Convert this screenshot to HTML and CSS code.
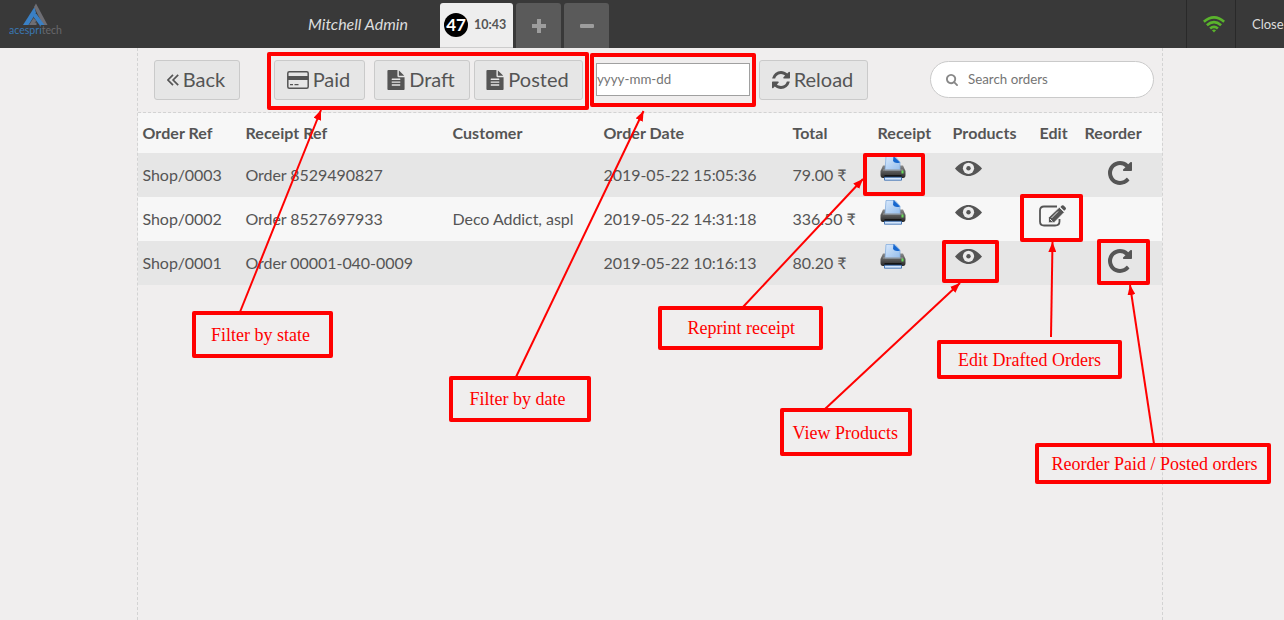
FILE: index.html
```html
<!DOCTYPE html>
<html lang="en">
<head>
<meta charset="utf-8">
<title>Orders</title>
<link rel="stylesheet" href="styles.css">
</head>
<body>
<svg class="defs" width="0" height="0">
  <defs>
    <linearGradient id="paper" x1="0" y1="0" x2="1" y2="1"><stop offset="0" stop-color="#d9e9fc"/><stop offset="1" stop-color="#94bdec"/></linearGradient>
    <linearGradient id="shell" x1="0" y1="0" x2="0" y2="1"><stop offset="0" stop-color="#8a8a8a"/><stop offset=".45" stop-color="#5c5c5c"/><stop offset="1" stop-color="#262626"/></linearGradient>
    <symbol id="file" viewBox="128 0 1536 1792"><path d="M1596 476q14 14 28 36h-472v-472q22 14 36 28zm-476 164h544v1056q0 40-28 68t-68 28h-1344q-40 0-68-28t-28-68v-1600q0-40 28-68t68-28h800v544q0 40 28 68t68 28zm160 736v-64q0-14-9-23t-23-9h-704q-14 0-23 9t-9 23v64q0 14 9 23t23 9h704q14 0 23-9t9-23zm0-256v-64q0-14-9-23t-23-9h-704q-14 0-23 9t-9 23v64q0 14 9 23t23 9h704q14 0 23-9t9-23zm0-256v-64q0-14-9-23t-23-9h-704q-14 0-23 9t-9 23v64q0 14 9 23t23 9h704q14 0 23-9t9-23z"/></symbol>
    <symbol id="repeat" viewBox="128 128 1536 1536"><path d="M1664 256v448q0 26-19 45t-45 19h-448q-42 0-59-40-17-39 14-69l138-138q-148-137-349-137-104 0-198.500 40.500t-163.500 109.500-109.500 163.500-40.500 198.500 40.500 198.500 109.500 163.500 163.500 109.500 198.500 40.500q119 0 225-52t179-147q7-10 23-12 15 0 25 9l137 138q9 8 9.500 20.500t-7.500 22.500q-109 132-264 204.500t-327 72.500q-156 0-298-61t-245-164-164-245-61-298 61-298 164-245 245-164 298-61q147 0 284.500 55.500t244.500 156.500l130-129q29-31 70-14 39 17 39 59z"/></symbol>
    <symbol id="eye" viewBox="0 0 27 15"><path d="M0 7.500C5 2 9 0 13.500 0S22 2 27 7.500C22 13 18 15 13.500 15S5 13 0 7.500z"/><circle cx="13.500" cy="7.300" r="5.600" fill="#ececec"/><circle cx="13.500" cy="7.300" r="2.200"/></symbol>
    <symbol id="printer" viewBox="0 0 26 25">
      <path d="M3 9.500h20l2.500 5.500v4q0 3-2.500 3H3q-2.500 0-2.500-3v-4z" fill="url(#shell)"/>
      <path d="M6 .5h9l5 5.500v8H5z" fill="url(#paper)" stroke="#86aede" stroke-width=".8"/>
      <path d="M13.500 0 20 6.500q-5 1.500-7-1.500z" fill="#1767ce"/>
      <path d="M3 14h20" stroke="#9a9a9a" stroke-width="1"/>
      <path d="M4.500 19h17v3h-17z" fill="#161616"/>
      <path d="M4.500 21.200h17v3h-17z" fill="#d4e6fc" stroke="#275fa9" stroke-width=".8"/>
      <path d="M21.500 14.500h2v3h-2z" fill="#68dc58"/>
    </symbol>
  </defs>
</svg>

<header class="topbar">
  <svg class="logo" width="64" height="40" viewBox="0 0 64 40">
    <path d="M25.500 4 14 22h5.500L27 10z" fill="#3a80c5"/>
    <path d="M27 .5 25 4l9 18h4.500z" fill="#6e6e74"/>
    <path d="M25.500 10.500 24.500 14l6 8h5L27.500 11z" fill="#3a80c5"/>
    <path d="M24.500 15 20 22h7.500v-2.500h-2l2-1.500z" fill="#6e6e74"/>
    <text x="0" y="31" font-size="10.500" textLength="53" lengthAdjust="spacingAndGlyphs"><tspan fill="#3a77b3">acespri</tspan><tspan fill="#68686c">tech</tspan></text>
  </svg>
  <span class="username">Mitchell Admin</span>
  <nav class="tabs">
    <div class="tab active"><span class="seq">47</span><span class="time">10:43</span></div>
    <div class="tab"><svg width="14" height="14"><path d="M5 0h4v5h5v4H9v5H5V9H0V5h5z"/></svg></div>
    <div class="tab"><svg width="14" height="14"><rect y="5" width="14" height="4" rx="1"/></svg></div>
  </nav>
  <div class="status">
    <svg width="22" height="17" viewBox="0 0 22 17"><g fill="none" stroke="#5ab32c" stroke-width="2.700"><path d="M.8 5.800Q11-3 21.200 5.800"/><path d="M3.900 9.200Q11 3 18.100 9.200"/><path d="M7.100 12.500Q11 9.100 14.900 12.500"/></g><path d="M8.900 14.300q2.100-1.500 4.200 0L11 16.600z" fill="#5ab32c"/></svg>
  </div>
  <div class="close">Close</div>
</header>

<main class="orders">
  <div class="toolbar">
    <button class="btn back"><svg width="12" height="12" viewBox="0 0 12 12" class="line"><path d="M6 .8.900 6 6 11.200M11.200.800 6.100 6l5.100 5.200"/></svg>Back</button>
    <button class="btn paid"><svg width="22" height="18" viewBox="0 0 22 18"><rect x=".8" y=".8" width="20.400" height="16.400" rx="1.500" fill="none" stroke="#555" stroke-width="1.500"/><path d="M1 5h20v4H1zM3 13h3v1.300H3zm4.500 0h4v1.300h-4z"/></svg>Paid</button>
    <button class="btn draft"><svg width="18" height="20"><use href="#file"/></svg>Draft</button>
    <button class="btn posted"><svg width="18" height="20"><use href="#file"/></svg>Posted</button>
    <input class="date" type="text" placeholder="yyyy-mm-dd">
    <button class="btn reload"><svg width="18" height="18" viewBox="128 128 1536 1536"><path d="M1639 1056q0 5-1 7-64 268-268 434.500t-478 166.500q-146 0-282.500-55t-243.500-157l-129 129q-19 19-45 19t-45-19-19-45v-448q0-26 19-45t45-19h448q26 0 45 19t19 45-19 45l-137 137q71 66 161 102t187 36q134 0 250-65t186-179q11-17 53-117 8-23 30-23h192q13 0 22.500 9.500t9.500 22.500zm25-800v448q0 26-19 45t-45 19h-448q-26 0-45-19t-19-45 19-45l138-138q-148-137-349-137-134 0-250 65t-186 179q-11 17-53 117-8 23-30 23h-199q-13 0-22.500-9.500t-9.500-22.500v-7q65-268 270-434.500t480-166.500q146 0 284 55.500t245 156.500l130-129q19-19 45-19t45 19 19 45z"/></svg>Reload</button>
    <label class="search"><svg width="12" height="12" viewBox="64 128 1664 1664"><path d="M1216 832q0-185-131.500-316.500t-316.500-131.500-316.500 131.500-131.500 316.500 131.500 316.500 316.500 131.500 316.500-131.500 131.500-316.500zm512 832q0 52-38 90t-90 38q-54 0-90-38l-343-342q-179 124-399 124-143 0-273.500-55.500t-225-150-150-225-55.500-273.500 55.500-273.500 150-225 225-150 273.500-55.500 273.500 55.500 225 150 150 225 55.500 273.500q0 220-124 399l343 343q37 37 37 90z"/></svg><input type="text" placeholder="Search orders"></label>
  </div>

  <table class="list">
    <colgroup><col class="c-ref"><col class="c-receipt"><col class="c-customer"><col class="c-date"><col class="c-total"><col class="c-print"><col class="c-products"><col class="c-edit"><col></colgroup>
    <thead><tr><th>Order Ref</th><th>Receipt Ref</th><th>Customer</th><th>Order Date</th><th>Total</th><th>Receipt</th><th>Products</th><th>Edit</th><th>Reorder</th></tr></thead>
    <tbody>
      <tr><td>Shop/0003</td><td>Order 8529490827</td><td></td><td>2019-05-22 15:05:36</td><td>79.00 ₹</td>
        <td><svg class="i-print"><use href="#printer"/></svg></td><td><svg class="i-eye"><use href="#eye"/></svg></td><td></td><td><svg class="i-repeat"><use href="#repeat"/></svg></td></tr>
      <tr><td>Shop/0002</td><td>Order 8527697933</td><td>Deco Addict, aspl</td><td>2019-05-22 14:31:18</td><td>336.50 ₹</td>
        <td><svg class="i-print"><use href="#printer"/></svg></td><td><svg class="i-eye"><use href="#eye"/></svg></td>
        <td><svg class="i-edit" viewBox="0 0 27 22"><path d="M18 1.500H5Q1 1.500 1 5.500v11Q1 20.500 5 20.500h11q4.500 0 4.500-4V14" fill="none" stroke="#555" stroke-width="1.800"/><path d="M20.300 2.300 25.300 7.300 15 17.700H9.500v-5.200z" stroke="#f7f7f7" stroke-width=".8"/><path d="m21.400 2 1.400-1.400q.9-.8 1.800 0l2 2q.9.900 0 1.800l-1.400 1.400z"/><path d="m12.500 13 6.500-6.500M11 14l2.500 2.500" stroke="#f7f7f7" stroke-width=".9"/></svg></td><td></td></tr>
      <tr><td>Shop/0001</td><td>Order 00001-040-0009</td><td></td><td>2019-05-22 10:16:13</td><td>80.20 ₹</td>
        <td><svg class="i-print"><use href="#printer"/></svg></td><td><svg class="i-eye"><use href="#eye"/></svg></td><td></td><td><svg class="i-repeat"><use href="#repeat"/></svg></td></tr>
    </tbody>
  </table>
</main>

<svg class="notes" width="1284" height="620" viewBox="0 0 1284 620">
  <defs><marker id="head" viewBox="0 0 10 8" refX="10" refY="4" markerWidth="10" markerHeight="8" markerUnits="userSpaceOnUse" orient="auto"><path d="M0 0 10 4 0 8z"/></marker></defs>
  <g class="frames">
    <rect x="269" y="54" width="318" height="54"/>
    <rect x="592" y="55" width="162" height="50"/>
    <rect x="865" y="155" width="58" height="39"/>
    <rect x="1022" y="196" width="59" height="44"/>
    <rect x="944" y="242" width="53" height="39"/>
    <rect x="1099" y="241" width="49" height="42"/>
    <rect x="194" y="313" width="137" height="43"/>
    <rect x="451" y="378" width="138" height="42"/>
    <rect x="660" y="308" width="161" height="40"/>
    <rect x="782" y="410" width="128" height="44"/>
    <rect x="939" y="342" width="181" height="35"/>
    <rect x="1037" y="445" width="232" height="37"/>
  </g>
  <g class="arrows">
    <path d="M240 312 321 110"/><path d="M516 377 643.500 111"/><path d="M743 307 863 179"/>
    <path d="M825 409 960 283"/><path d="M1051 337 1052.500 242"/><path d="M1154 444 1130 285"/>
  </g>
  <g class="captions">
    <text x="211" y="341">Filter by state</text>
    <text x="469.500" y="405">Filter by date</text>
    <text x="687.500" y="334">Reprint receipt</text>
    <text x="792.500" y="439">View Products</text>
    <text x="958" y="366">Edit Drafted Orders</text>
    <text x="1051.500" y="470">Reorder Paid / Posted orders</text>
  </g>
</svg>
</body>
</html>
```

FILE: styles.css
```css
* { box-sizing: border-box; }
body {
  margin: 0;
  width: 1284px;
  height: 620px;
  overflow: hidden;
  display: flex;
  flex-direction: column;
  background: #f0eeee;
  color: #555;
  font-family: Lato, "DejaVu Sans", sans-serif;
  font-size: 16px;
}
svg { display: block; fill: #555; flex: none; }
.defs { position: absolute; }

.topbar { display: flex; height: 48px; background: #393939; flex: none; }
.logo { margin: 3px 0 0 9px; font-family: Lato, sans-serif; }
.username { margin-left: 235px; width: 132px; line-height: 48px; font-style: italic; color: #ddd; }
.tabs { display: flex; gap: 3px; padding-top: 3px; }
.tab {
  width: 45px;
  display: flex;
  align-items: center;
  justify-content: center;
  background: #5a5a5a;
  border-radius: 3px 3px 0 0;
}
.tab svg { fill: #9d9d9d; }
.tab.active {
  width: 73px;
  gap: 6px;
  justify-content: flex-start;
  padding-left: 4px;
  padding-bottom: 1px;
  background: #eee;
  border-bottom: 1px solid #ccc;
}
.seq {
  width: 24px;
  height: 24px;
  border-radius: 50%;
  background: #000;
  color: #fff;
  font-size: 17px;
  font-weight: 700;
  line-height: 24px;
  text-align: center;
}
.time { padding-bottom: 1px; font-size: 12.5px; font-weight: 700; }
.status, .close { border-left: 1px solid #292929; }
.status { margin-left: auto; width: 49px; padding: 16px 0 0 16px; }
.close { width: 49px; padding-left: 16px; font-size: 13px; line-height: 48px; color: #ddd; }

.orders {
  flex: 1;
  width: 1026px;
  margin-left: 137px;
  border: dashed #d3d3d3;
  border-width: 0 1px;
}
.toolbar {
  display: flex;
  align-items: center;
  height: 65px;
  padding: 0 8px 1px 16px;
  border-bottom: 1px dashed #d3d3d3;
}
.btn {
  display: flex;
  align-items: center;
  justify-content: center;
  gap: 4px;
  height: 40px;
  padding: 0 2px 2px 0;
  border: 1px solid #cacaca;
  border-radius: 3px;
  background: #e6e6e6;
  color: #555;
  font: 20px Lato, sans-serif;
}
.btn svg { margin-top: 2px; }
.line { fill: none; stroke: #555; stroke-width: 1.7; }
.back { width: 86px; }
.paid { width: 91px; margin-left: 34px; }
.draft { width: 96px; margin-left: 9px; }
.posted { width: 109px; margin-left: 4px; }
.reload { width: 109px; margin-left: 9px; }
input::placeholder { color: #757575; opacity: 1; }
.date {
  width: 154px;
  height: 33px;
  margin-left: 13px;
  padding: 0 1px 2px 0;
  border: 1px solid #a0a0a0;
  background: #fff;
  font: 13.333px Lato, sans-serif;
}
.search {
  display: flex;
  align-items: center;
  gap: 10px;
  width: 224px;
  height: 37px;
  margin-left: auto;
  padding-left: 15px;
  border: 1px solid #cacaca;
  border-radius: 19px;
  background: #fff;
}
.search svg { fill: #888; }
.search input { width: 160px; padding: 0 0 2px; border: 0; outline: 0; font: 13.333px Lato, sans-serif; }

.list { width: 1024px; table-layout: fixed; border-collapse: collapse; }
.c-ref { width: 103px; }
.c-receipt { width: 207px; }
.c-customer { width: 151px; }
.c-date { width: 189px; }
.c-total { width: 85px; }
.c-print { width: 75px; }
.c-products { width: 87px; }
.c-edit { width: 45px; }
th, td { padding: 0 0 2px 4.5px; text-align: left; white-space: nowrap; }
th { letter-spacing: .06px; }
td { letter-spacing: -.05px; }
thead tr { height: 40px; background: #f7f7f7; }
tbody tr { height: 44px; background: #e6e6e6; }
tbody tr:nth-child(even) { background: #f7f7f7; }
.i-print { width: 26px; height: 25px; margin: 0 0 11px 2px; }
.i-eye { width: 27px; height: 15px; margin: 0 0 12px 2px; }
.i-edit { width: 27px; height: 22px; margin: 0 0 4px -1px; overflow: visible; }
.i-repeat { width: 24px; height: 24px; margin: 0 0 2px 23px; }

.notes { position: absolute; left: 0; top: 0; pointer-events: none; }
.frames { fill: none; stroke: #f00; stroke-width: 4; stroke-linejoin: round; }
.arrows { fill: none; stroke: #f00; stroke-width: 2; }
.arrows path { marker-end: url(#head); }
.notes marker path { fill: #f00; stroke: none; }
.captions { fill: #f00; font: 18px "Liberation Serif", serif; }
```
